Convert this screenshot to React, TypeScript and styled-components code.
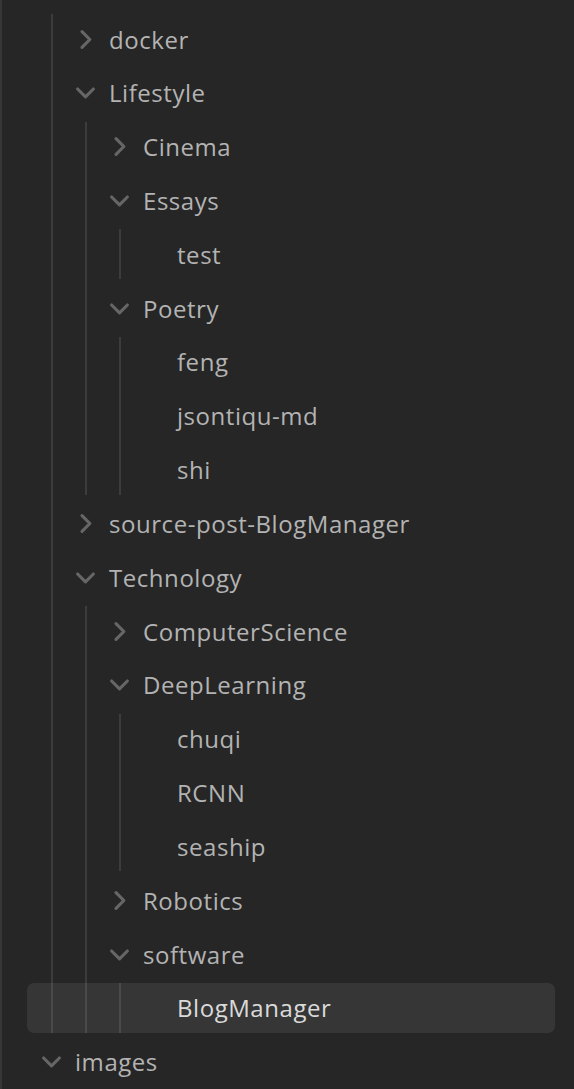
import React from "react";
import styled, { createGlobalStyle } from "styled-components";

const GlobalStyle = createGlobalStyle`
  html, body {
    margin: 0;
    padding: 0;
    background: #262626;
  }
  body {
    font-family: "Open Sans", "Noto Sans", "Liberation Sans", sans-serif;
  }
`;

type Node = {
  name: string;
  children?: Node[];
  open?: boolean;
  active?: boolean;
};

const GAP = "3.84px";

const Panel = styled.div`
  box-sizing: border-box;
  height: 100vh;
  overflow: hidden;
  background: #262626;
  border-left: 2px solid #363636;
  padding: 14px 19px 0 25px;
`;

const List = styled.div`
  display: flex;
  flex-direction: column;
  gap: ${GAP};
`;

const Group = styled.div<{ $top?: boolean }>`
  display: flex;
  flex-direction: column;
  gap: ${GAP};
  margin-left: ${(p) => (p.$top ? "24px" : "32px")};
  border-left: 2px solid #3c3c3c;
`;

const Row = styled.div<{ $depth: number; $active?: boolean }>`
  box-sizing: border-box;
  display: flex;
  align-items: center;
  height: 50px;
  margin-left: ${(p) => (p.$depth === 0 ? 0 : 8 - 34 * p.$depth)}px;
  padding-left: ${(p) => 13 + 34 * p.$depth}px;
  border-radius: 7px;
  background: ${(p) => (p.$active ? "rgba(255, 255, 255, 0.075)" : "transparent")};
  color: ${(p) => (p.$active ? "#dadada" : "#b3b3b3")};
  font-size: 24px;
  letter-spacing: 0.55px;
  white-space: nowrap;
`;

const IconSlot = styled.span`
  display: flex;
  align-items: center;
  justify-content: center;
  width: 22px;
  height: 22px;
  margin-right: 13px;
  flex: none;
`;

const Chevron = styled.svg<{ $open?: boolean }>`
  width: 21px;
  height: 21px;
  transform: rotate(${(p) => (p.$open ? "0deg" : "-90deg")});
`;

const Label = styled.span``;

const Arrow: React.FC<{ open?: boolean }> = ({ open }) => (
  <Chevron $open={open} viewBox="0 0 24 24" fill="none">
    <path
      d="M3 8L12 17L21 8"
      stroke="#666666"
      strokeWidth={3.6}
      strokeLinecap="round"
      strokeLinejoin="round"
    />
  </Chevron>
);

const TreeItem: React.FC<{ node: Node; depth: number }> = ({ node, depth }) => {
  const isFolder = !!node.children;
  return (
    <>
      <Row $depth={depth} $active={node.active}>
        <IconSlot>{isFolder && <Arrow open={node.open} />}</IconSlot>
        <Label>{node.name}</Label>
      </Row>
      {isFolder && node.open && node.children!.length > 0 && (
        <Group>
          {node.children!.map((c) => (
            <TreeItem key={c.name} node={c} depth={depth + 1} />
          ))}
        </Group>
      )}
    </>
  );
};

const posts: Node[] = [
  { name: "docker", children: [] },
  {
    name: "Lifestyle",
    open: true,
    children: [
      { name: "Cinema", children: [] },
      { name: "Essays", open: true, children: [{ name: "test" }] },
      {
        name: "Poetry",
        open: true,
        children: [{ name: "feng" }, { name: "jsontiqu-md" }, { name: "shi" }],
      },
    ],
  },
  { name: "source-post-BlogManager", children: [] },
  {
    name: "Technology",
    open: true,
    children: [
      { name: "ComputerScience", children: [] },
      {
        name: "DeepLearning",
        open: true,
        children: [{ name: "chuqi" }, { name: "RCNN" }, { name: "seaship" }],
      },
      { name: "Robotics", children: [] },
      {
        name: "software",
        open: true,
        children: [{ name: "BlogManager", active: true }],
      },
    ],
  },
];

export default function App() {
  return (
    <>
      <GlobalStyle />
      <Panel>
        <List>
          <Group $top>
            {posts.map((n) => (
              <TreeItem key={n.name} node={n} depth={1} />
            ))}
          </Group>
          <TreeItem node={{ name: "images", open: true, children: [] }} depth={0} />
        </List>
      </Panel>
    </>
  );
}
